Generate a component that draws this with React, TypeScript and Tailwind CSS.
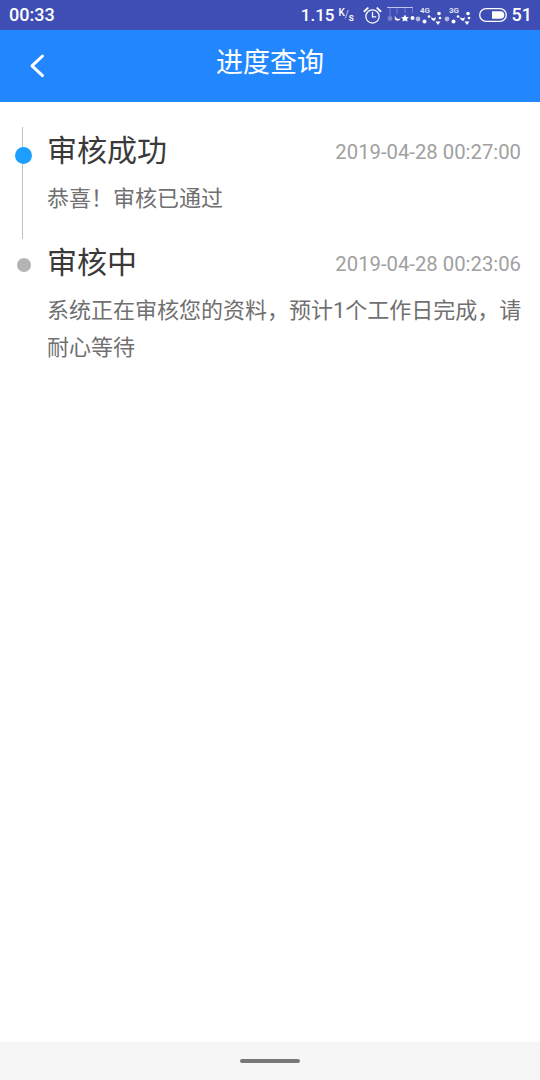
const cjk = "font-['Roboto','Noto_Sans_CJK_SC','Noto_Sans_CJK_JP',sans-serif]";

function AlarmIcon() {
  return (
    <svg viewBox="0 0 20 20" className="h-[19px] w-[19px]" fill="none" stroke="white" strokeWidth="1.3" strokeLinecap="round" aria-hidden="true">
      <circle cx="10" cy="11" r="7" />
      <path d="M10 6.8V11.4H13.4" />
      <path d="M1.5 5.5 5 2.2M18.5 5.5 15 2.2" strokeWidth="2" />
    </svg>
  );
}

function BatteryIcon() {
  return (
    <svg viewBox="0 0 28 14" className="h-[14px] w-[28px]" fill="none" aria-hidden="true">
      <rect x="0.7" y="0.7" width="26.6" height="12.6" rx="6.3" stroke="white" strokeWidth="1.3" />
      <path d="M13 3.2H21.5A3.8 3.8 0 0 1 21.5 10.8H13Z" fill="white" />
    </svg>
  );
}

function Signal({ label }: { label: string }) {
  return (
    <svg viewBox="0 0 28 22" className="h-[22px] w-[28px]" fill="white" aria-hidden="true">
      <text x="5" y="9" fontSize="8" fontWeight="700" fontFamily="Roboto, sans-serif" fillOpacity="0.85">{label}</text>
      <circle cx="3" cy="15" r="2.400" fillOpacity="0.6" />
      <circle cx="9.500" cy="17.500" r="2" />
      <circle cx="14" cy="12.500" r="1.300" />
      <path d="M15.500 12.500c1.500 2.200 3.500 2.200 5.500.5l-1 3.500c-2 .8-3.500-.5-4.500-4Z" />
      <circle cx="24" cy="9.500" r="1.800" />
      <circle cx="25" cy="14" r="1.300" />
      <path d="M20.500 17.500h5l-2.500 3.500Z" />
    </svg>
  );
}

function Notifications() {
  return (
    <svg viewBox="0 0 28 20" className="h-[20px] w-[28px]" fill="white" aria-hidden="true">
      <path d="M0 2.500H26" stroke="white" strokeOpacity="0.85" strokeWidth="0.8" />
      <path d="M3 3v8M10 3v6M18 3v5M25.500 3v5" stroke="white" strokeOpacity="0.4" strokeWidth="0.7" />
      <circle cx="3" cy="13.500" r="2.400" fillOpacity="0.3" />
      <path d="M8 10.500c.5 3 3 4 5.500 3-1.500 3.500-7 3-5.500-3Z" />
      <path d="M18 9.500l1.300 2.500 2.600.3-1.900 1.800.5 2.500-2.500-1.200-2.500 1.200.5-2.500-1.900-1.800 2.600-.3Z" />
      <circle cx="25.500" cy="13" r="2" />
    </svg>
  );
}

function StatusBar() {
  return (
    <div className="flex h-[30px] items-center justify-between bg-[#3f4eb4] pl-[9px] pr-[8px] text-white font-['Roboto',sans-serif]">
      <span className="text-[18px] font-medium leading-none">00:33</span>
      <div className="flex items-center">
        <span className="text-[17px] font-medium leading-none">1.15</span>
        <span className="ml-[4px] flex h-[15px] w-[15px] justify-between text-[10px] font-medium leading-none">
          <span className="self-start">K</span>
          <span className="self-center font-light">/</span>
          <span className="self-end">s</span>
        </span>
        <span className="ml-[9px] flex"><AlarmIcon /></span>
        <span className="ml-[5px] flex"><Notifications /></span>
        <span className="flex"><Signal label="4G" /></span>
        <span className="ml-px flex"><Signal label="3G" /></span>
        <span className="ml-[7px] flex"><BatteryIcon /></span>
        <span className="ml-[5px] text-[18px] font-medium leading-none">51</span>
      </div>
    </div>
  );
}

function TimelineItem({
  title,
  time,
  active,
  children,
}: {
  title: string;
  time: string;
  active?: boolean;
  children: React.ReactNode;
}) {
  return (
    <div className="flex">
      <div className="relative w-[47px] shrink-0">
        {active && <div className="absolute bottom-0 left-[22px] top-0 w-px bg-[#c0c0c0]" />}
        {active ? (
          <div className="absolute left-[15px] top-[20px] h-[17px] w-[17px] rounded-full bg-[#1e9fff]" />
        ) : (
          <div className="absolute left-[17px] top-[19px] h-[14px] w-[14px] rounded-full bg-[#b4b4b4]" />
        )}
      </div>
      <div className={`min-w-0 flex-1 pr-[15px] ${active ? "pb-[22px]" : ""}`}>
        <div className="flex h-[48px] items-center justify-between pr-[4px]">
          <span className="text-[30px] leading-[48px] text-[#3a3a3a]">{title}</span>
          <span className="pt-[2px] text-[20.3px] leading-none text-[#a0a0a0]">{time}</span>
        </div>
        <p className="mt-[5px] text-[22px] leading-[37px] text-[#707070]">{children}</p>
      </div>
    </div>
  );
}

export default function App() {
  return (
    <div className={`flex h-[1080px] w-[540px] flex-col overflow-hidden bg-white ${cjk}`}>
      <StatusBar />
      <header className="relative flex h-[72px] items-center justify-center bg-[#2287ff] pb-[5px]">
        <svg viewBox="0 0 20 30" className="absolute left-[27px] top-[22px] h-[30px] w-[20px]" fill="none" stroke="white" strokeWidth="3" strokeLinecap="round" strokeLinejoin="round" aria-hidden="true">
          <path d="M15.500 4 5 13.800 15.500 23.600" />
        </svg>
        <h1 className="text-[27px] font-normal leading-none text-white">进度查询</h1>
      </header>
      <div className="flex-1 pt-[25px]">
        <TimelineItem title="审核成功" time="2019-04-28 00:27:00" active>
          恭喜！审核已通过
        </TimelineItem>
        <TimelineItem title="审核中" time="2019-04-28 00:23:06">
          系统正在审核您的资料，预计1个工作日完成，请耐心等待
        </TimelineItem>
      </div>
      <div className="flex h-[38px] items-center justify-center bg-[#f6f6f6]">
        <div className="h-[4px] w-[60px] rounded-full bg-[#787878]" />
      </div>
    </div>
  );
}
